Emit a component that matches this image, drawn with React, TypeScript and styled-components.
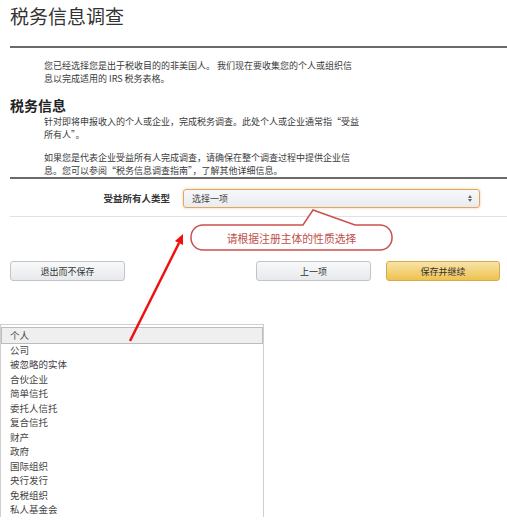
import React from "react";
import styled, { createGlobalStyle } from "styled-components";

const GlobalStyle = createGlobalStyle`
  html, body {
    margin: 0;
    padding: 0;
    background: #fff;
  }
  body {
    font-family: "Noto Sans CJK SC", "Noto Sans", sans-serif;
    color: #333;
  }
`;

const Page = styled.div`
  position: relative;
  width: 507px;
  height: 520px;
  overflow: hidden;
  background: #fff;
`;

const Content = styled.div`
  padding-left: 10px;
`;

const Title = styled.h1`
  margin: 0;
  font-size: 19px;
  line-height: 32px;
  font-weight: 400;
  color: #333;
`;

const Rule = styled.div<{ $top: number }>`
  margin-top: ${(p) => p.$top}px;
  height: 2px;
  background: #6a6a6a;
`;

const LightRule = styled.div`
  height: 1px;
  background: #e2e2e2;
`;

const Para = styled.p<{ $top: number }>`
  margin: ${(p) => p.$top}px 0 0 34px;
  font-size: 9px;
  line-height: 13px;
  color: #3a3a3a;
  white-space: nowrap;
`;

const SectionHeading = styled.h2`
  margin: 11px 0 0;
  font-size: 14px;
  line-height: 18px;
  font-weight: 700;
  color: #222;
`;

const FormRow = styled.div`
  display: grid;
  grid-template-columns: 160px 297px;
  column-gap: 13px;
  align-items: center;
  height: 37px;
`;

const FieldLabel = styled.label`
  text-align: right;
  font-size: 9.5px;
  font-weight: 700;
  color: #333;
`;

const SelectBox = styled.div`
  display: flex;
  align-items: center;
  justify-content: space-between;
  height: 19px;
  margin-top: 2px;
  padding: 0 7px 0 8px;
  box-sizing: border-box;
  border: 1px solid #e3a65e;
  border-radius: 3px;
  background: linear-gradient(#f7f8fa, #e9ebee);
  box-shadow: 0 0 3px rgba(228, 140, 50, 0.45);
  font-size: 9px;
  color: #444;
`;

const ButtonRow = styled.div`
  display: flex;
  align-items: center;
  margin-top: 44px;
  padding-right: 7px;
`;

const Spacer = styled.div`
  flex: 1;
`;

const Button = styled.button<{ $primary?: boolean; $gap?: number }>`
  width: 115px;
  height: 20px;
  margin-left: ${(p) => p.$gap ?? 0}px;
  padding: 0;
  border: 1px solid ${(p) => (p.$primary ? "#d4ac4c" : "#c2c4c8")};
  border-radius: 3px;
  background: ${(p) =>
    p.$primary
      ? "linear-gradient(#f8e3a8, #efc24f)"
      : "linear-gradient(#f8f9fa, #e8e9ec)"};
  font-family: inherit;
  font-size: 9px;
  color: #333;
`;

const Dropdown = styled.ul`
  margin: 43px 0 0;
  width: 264px;
  padding: 3px 0 0;
  list-style: none;
  border: 1px solid #cfcfcf;
  border-bottom: none;
  box-sizing: border-box;
  background: #fff;
`;

const Option = styled.li<{ $active?: boolean }>`
  height: 14.5px;
  line-height: 14.5px;
  padding-left: 8px;
  margin: 0 1px;
  box-sizing: border-box;
  font-size: 9.5px;
  color: #444;
  background: ${(p) => (p.$active ? "#efefef" : "transparent")};
  outline: ${(p) => (p.$active ? "1px solid #bdbdbd" : "none")};
`;

const Overlay = styled.svg`
  position: absolute;
  left: 0;
  top: 0;
  pointer-events: none;
`;

const Callout = styled.div`
  position: absolute;
  left: 191px;
  top: 225px;
  width: 201px;
  height: 25px;
  display: flex;
  align-items: center;
  justify-content: center;
`;

const CalloutShape = styled.svg`
  position: absolute;
  left: 0;
  top: 0;
  overflow: visible;
`;

const CalloutText = styled.span`
  position: relative;
  font-size: 10.8px;
  color: #c0504d;
`;

const options = [
  "个人",
  "公司",
  "被忽略的实体",
  "合伙企业",
  "简单信托",
  "委托人信托",
  "复合信托",
  "财产",
  "政府",
  "国际组织",
  "央行发行",
  "免税组织",
  "私人基金会",
];

export default function App() {
  return (
    <Page>
      <GlobalStyle />
      <Content>
        <Title>税务信息调查</Title>
        <Rule $top={14} />
        <Para $top={11}>
          您已经选择您是出于税收目的的非美国人。 我们现在要收集您的个人或组织信
          <br />
          息以完成适用的 IRS 税务表格。
        </Para>
        <SectionHeading>税务信息</SectionHeading>
        <Para $top={1}>
          针对即将申报收入的个人或企业，完成税务调查。此处个人或企业通常指“受益
          <br />
          所有人”。
        </Para>
        <Para $top={10}>
          如果您是代表企业受益所有人完成调查，请确保在整个调查过程中提供企业信
          <br />
          息。您可以参阅“税务信息调查指南”，了解其他详细信息。
        </Para>
        <Rule $top={0} />
        <FormRow>
          <FieldLabel>受益所有人类型</FieldLabel>
          <SelectBox>
            <span>选择一项</span>
            <svg width="4" height="7" viewBox="0 0 4 7">
              <path d="M0 3 L2 0 L4 3 Z M0 4 L2 7 L4 4 Z" fill="#666" />
            </svg>
          </SelectBox>
        </FormRow>
        <LightRule />
        <ButtonRow>
          <Button>退出而不保存</Button>
          <Spacer />
          <Button>上一项</Button>
          <Button $primary $gap={15} style={{ width: 114 }}>
            保存并继续
          </Button>
        </ButtonRow>
      </Content>
      <Dropdown>
        {options.map((o, i) => (
          <Option key={o} $active={i === 0}>
            {o}
          </Option>
        ))}
      </Dropdown>

      <Callout>
        <CalloutShape width="201" height="25" viewBox="0 0 201 25">
          <path
            d="M12 0 H112 L122 -15 L164 0 H189 A12 12 0 0 1 201 12 V13 A12 12 0 0 1 189 25 H12 A12 12 0 0 1 0 13 V12 A12 12 0 0 1 12 0 Z"
            fill="#fff"
            stroke="#c9504f"
            strokeWidth="1.5"
          />
        </CalloutShape>
        <CalloutText>请根据注册主体的性质选择</CalloutText>
      </Callout>

      <Overlay width="507" height="520" viewBox="0 0 507 520">
        <line x1="130" y1="341" x2="179" y2="243" stroke="#f01010" strokeWidth="2.5" />
        <polygon points="183,234 183,245 175,241" fill="#f01010" />
      </Overlay>
    </Page>
  );
}
